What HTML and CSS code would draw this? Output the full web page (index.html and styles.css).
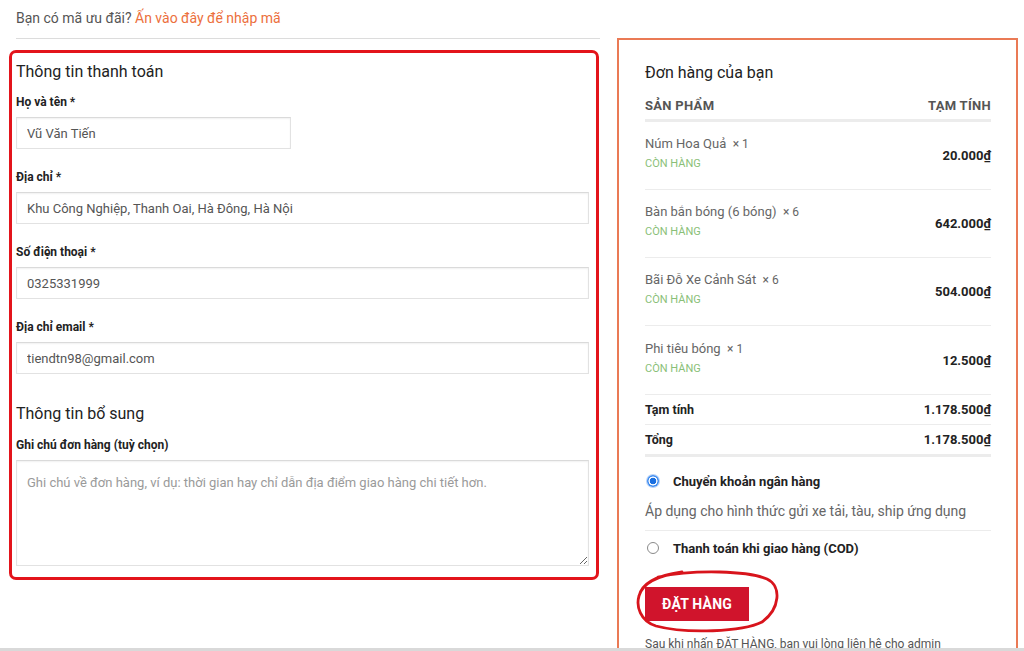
FILE: index.html
```html
<!DOCTYPE html>
<html lang="vi">
<head>
<meta charset="utf-8">
<title>Thanh toán</title>
<link rel="stylesheet" href="styles.css">
</head>
<body>
<div class="page">
  <div class="left">
    <div class="coupon">Bạn có mã ưu đãi? <a href="#" class="coupon-link">Ấn vào đây để nhập mã</a></div>
    <form class="billing">
      <h3 class="sec-title">Thông tin thanh toán</h3>
      <div class="field">
        <label class="lbl">Họ và tên *</label>
        <input class="inp inp-short" type="text" value="Vũ Văn Tiến">
      </div>
      <div class="field">
        <label class="lbl">Địa chỉ *</label>
        <input class="inp" type="text" value="Khu Công Nghiệp, Thanh Oai, Hà Đông, Hà Nội">
      </div>
      <div class="field">
        <label class="lbl">Số điện thoại *</label>
        <input class="inp" type="text" value="0325331999">
      </div>
      <div class="field">
        <label class="lbl">Địa chỉ email *</label>
        <input class="inp" type="text" value="tiendtn98@gmail.com">
      </div>
      <h3 class="sec-title sec-title-2">Thông tin bổ sung</h3>
      <label class="lbl">Ghi chú đơn hàng (tuỳ chọn)</label>
      <textarea class="notes" placeholder="Ghi chú về đơn hàng, ví dụ: thời gian hay chỉ dẫn địa điểm giao hàng chi tiết hơn."></textarea>
    </form>
  </div>
  <div class="right">
    <h3 class="sec-title">Đơn hàng của bạn</h3>
    <div class="thead">
      <span>SẢN PHẨM</span>
      <span>TẠM TÍNH</span>
    </div>
    <div class="item">
      <div class="item-info">
        <div class="item-name">Núm Hoa Quả&nbsp; <span class="qty">× 1</span></div>
        <div class="stock">CÒN HÀNG</div>
      </div>
      <div class="price">20.000₫</div>
    </div>
    <div class="item">
      <div class="item-info">
        <div class="item-name">Bàn bắn bóng (6 bóng)&nbsp; <span class="qty">× 6</span></div>
        <div class="stock">CÒN HÀNG</div>
      </div>
      <div class="price">642.000₫</div>
    </div>
    <div class="item">
      <div class="item-info">
        <div class="item-name">Bãi Đỗ Xe Cảnh Sát&nbsp; <span class="qty">× 6</span></div>
        <div class="stock">CÒN HÀNG</div>
      </div>
      <div class="price">504.000₫</div>
    </div>
    <div class="item item-last">
      <div class="item-info">
        <div class="item-name">Phi tiêu bóng&nbsp; <span class="qty">× 1</span></div>
        <div class="stock">CÒN HÀNG</div>
      </div>
      <div class="price">12.500₫</div>
    </div>
    <div class="total-row">
      <span>Tạm tính</span>
      <span>1.178.500₫</span>
    </div>
    <div class="total-row total-last">
      <span>Tổng</span>
      <span>1.178.500₫</span>
    </div>
    <div class="pay">
      <div class="pay-opt"><span class="radio radio-on"></span><span class="pay-label">Chuyển khoản ngân hàng</span></div>
      <div class="pay-desc">Áp dụng cho hình thức gửi xe tải, tàu, ship ứng dụng</div>
      <div class="pay-opt pay-opt-2"><span class="radio"></span><span class="pay-label">Thanh toán khi giao hàng (COD)</span></div>
    </div>
    <div class="btn-wrap">
      <button class="order-btn" type="button">ĐẶT HÀNG</button>
      <svg class="circle-mark" width="146" height="68" viewBox="0 0 146 68" aria-hidden="true">
        <path d="M22,8 C60,0 112,2 131,10 C146,17 144,40 126,53 C106,63 50,65 20,57 C4,52 0,37 3,27 C6,15 18,7 46,3" fill="none" stroke="#d8141c" stroke-width="2.8" stroke-linecap="round"/>
      </svg>
    </div>
    <p class="note">Sau khi nhấn ĐẶT HÀNG, bạn vui lòng liên hệ cho admin</p>
  </div>
</div>
<div class="bottom-edge"></div>
</body>
</html>
```

FILE: styles.css
```css
* { box-sizing: border-box; }

html, body {
  margin: 0;
  padding: 0;
  height: 651px;
  overflow: hidden;
  background: #fff;
  font-family: Roboto, "Noto Sans", "Liberation Sans", sans-serif;
  color: #222;
}

.page {
  display: flex;
  align-items: flex-start;
}

.left {
  width: 600px;
  flex: none;
}

.coupon {
  margin-left: 16px;
  height: 39px;
  padding-top: 8px;
  font-size: 14px;
  line-height: 20px;
  color: #555;
  border-bottom: 1px solid #dcdcdc;
}

.coupon-link {
  color: #ec6f3c;
  text-decoration: none;
}

.billing {
  margin: 11px 0 0 9px;
  width: 590px;
  border: 3px solid #e3141b;
  border-radius: 7px;
  padding: 9px 7px 11px 4px;
  display: flex;
  flex-direction: column;
}

.sec-title {
  margin: 0 0 12px;
  font-size: 16px;
  line-height: 20px;
  font-weight: 400;
  color: #222;
}

.sec-title-2 {
  margin-top: 10px;
  margin-bottom: 13px;
}

.field {
  display: flex;
  flex-direction: column;
  margin-bottom: 20px;
}

.lbl {
  display: block;
  font-size: 12px;
  line-height: 16px;
  font-weight: 700;
  color: #222;
  margin-bottom: 7px;
}

.inp {
  display: block;
  width: 100%;
  height: 32px;
  border: 1px solid #e2e2e2;
  border-top-color: #dadada;
  box-shadow: inset 0 1px 2px rgba(0,0,0,0.06);
  padding: 0 10px;
  font-family: inherit;
  font-size: 13px;
  color: #555;
  background: #fff;
  outline: none;
}

.inp-short {
  width: 275px;
}

.notes {
  display: block;
  width: 100%;
  height: 106px;
  border: 1px solid #e2e2e2;
  border-top-color: #dadada;
  box-shadow: inset 0 1px 2px rgba(0,0,0,0.06);
  padding: 13px 10px;
  font-family: inherit;
  font-size: 13px;
  line-height: 18px;
  color: #555;
  resize: vertical;
  outline: none;
}

.notes::placeholder {
  color: #9a9a9a;
}

.right {
  margin-left: 17px;
  margin-top: 38px;
  width: 401px;
  flex: none;
  border: 2px solid #ea7a55;
  border-bottom: none;
  padding: 23px 25px 0 26px;
  height: 640px;
}

.thead {
  display: flex;
  justify-content: space-between;
  font-size: 13px;
  line-height: 18px;
  font-weight: 700;
  color: #555;
  letter-spacing: 0.3px;
  margin-top: 14px;
  padding-bottom: 4px;
  border-bottom: 3px solid #ececec;
}

.item {
  display: flex;
  justify-content: space-between;
  align-items: center;
  height: 68px;
  border-bottom: 1px solid #ececec;
}

.item-last {
  height: 69px;
}

.item-info {
  padding-bottom: 4px;
}

.item-name {
  font-size: 13px;
  line-height: 18px;
  color: #666;
}

.qty {
  color: #666;
  font-size: 12px;
}

.stock {
  margin-top: 3px;
  font-size: 11px;
  line-height: 16px;
  color: #8abf78;
}

.price {
  font-size: 13px;
  font-weight: 700;
  color: #222;
}

.total-row {
  display: flex;
  justify-content: space-between;
  align-items: center;
  height: 30px;
  font-size: 12.5px;
  font-weight: 700;
  color: #222;
  border-bottom: 1px solid #ececec;
}

.total-row span:last-child {
  font-size: 13px;
}

.total-last {
  border-bottom: 3px solid #ececec;
  height: 32px;
}

.pay {
  padding-top: 15px;
}

.pay-opt {
  display: flex;
  align-items: center;
  height: 18px;
  padding-left: 2px;
}

.radio {
  width: 12px;
  height: 12px;
  border-radius: 50%;
  border: 1px solid #8a8a8a;
  background: #fff;
  flex: none;
  margin-right: 14px;
}

.radio-on {
  border: none;
  background: radial-gradient(circle, #1a6fe0 0 3px, #ffffff 3.6px 4.2px, #3f8cf0 4.8px 6px);
  box-shadow: 0 0 0 1px #b9d3f7;
}

.pay-label {
  font-size: 13px;
  font-weight: 700;
  color: #222;
}

.pay-desc {
  margin-top: 11px;
  font-size: 14px;
  line-height: 20px;
  color: #666;
  padding-bottom: 9px;
  border-bottom: 1px solid #ececec;
}

.pay-opt-2 {
  margin-top: 8px;
}

.btn-wrap {
  position: relative;
  margin-top: 30px;
  width: 104px;
}

.order-btn {
  display: block;
  width: 104px;
  height: 34px;
  border: none;
  background: #d0142c;
  color: #fff;
  font-family: inherit;
  font-size: 14px;
  font-weight: 700;
  letter-spacing: 0.2px;
  padding: 0;
}

.circle-mark {
  position: absolute;
  left: -9px;
  top: -18px;
  pointer-events: none;
}

.note {
  margin: 15px 0 0;
  font-size: 12px;
  line-height: 16px;
  color: #555;
}

.bottom-edge {
  position: fixed;
  left: 0;
  right: 0;
  bottom: 0;
  height: 3px;
  background: #d9d9d9;
}
```
